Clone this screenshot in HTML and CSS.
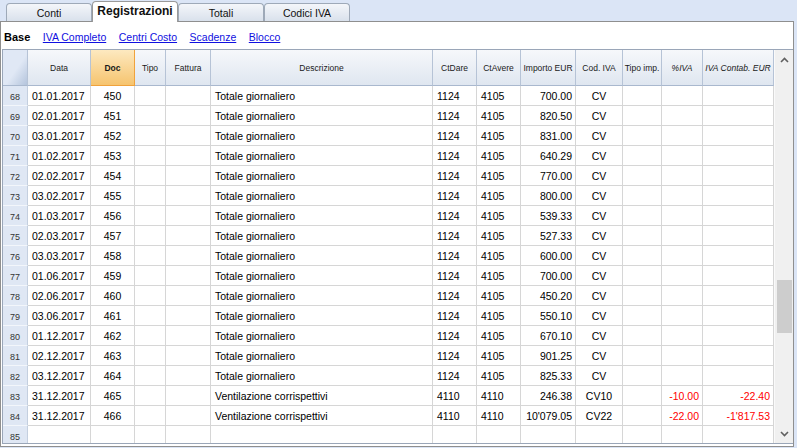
FILE: index.html
```html
<!DOCTYPE html>
<html>
<head>
<meta charset="utf-8">
<link rel="stylesheet" href="styles.css">
</head>
<body>
<div class="tabbar">
  <div class="tab">Conti</div>
  <div class="tab active">Registrazioni</div>
  <div class="tab">Totali</div>
  <div class="tab">Codici IVA</div>
</div>
<div class="panel">
  <div class="views">
    <span class="cur">Base</span>
    <a class="view">IVA Completo</a>
    <a class="view">Centri Costo</a>
    <a class="view">Scadenze</a>
    <a class="view">Blocco</a>
  </div>
  <div class="gridwrap">
    <div class="grid">
      <div class="h rn"></div>
      <div class="h">Data</div>
      <div class="h doc">Doc</div>
      <div class="h">Tipo</div>
      <div class="h">Fattura</div>
      <div class="h">Descrizione</div>
      <div class="h">CtDare</div>
      <div class="h">CtAvere</div>
      <div class="h">Importo EUR</div>
      <div class="h">Cod. IVA</div>
      <div class="h">Tipo imp.</div>
      <div class="h it">%IVA</div>
      <div class="h it">IVA Contab. EUR</div>

      <div class="n">68</div><div class="c">01.01.2017</div><div class="c m">450</div><div class="c"></div><div class="c"></div><div class="c">Totale giornaliero</div><div class="c">1124</div><div class="c">4105</div><div class="c r">700.00</div><div class="c m">CV</div><div class="c"></div><div class="c"></div><div class="c"></div>
      <div class="n">69</div><div class="c">02.01.2017</div><div class="c m">451</div><div class="c"></div><div class="c"></div><div class="c">Totale giornaliero</div><div class="c">1124</div><div class="c">4105</div><div class="c r">820.50</div><div class="c m">CV</div><div class="c"></div><div class="c"></div><div class="c"></div>
      <div class="n">70</div><div class="c">03.01.2017</div><div class="c m">452</div><div class="c"></div><div class="c"></div><div class="c">Totale giornaliero</div><div class="c">1124</div><div class="c">4105</div><div class="c r">831.00</div><div class="c m">CV</div><div class="c"></div><div class="c"></div><div class="c"></div>
      <div class="n">71</div><div class="c">01.02.2017</div><div class="c m">453</div><div class="c"></div><div class="c"></div><div class="c">Totale giornaliero</div><div class="c">1124</div><div class="c">4105</div><div class="c r">640.29</div><div class="c m">CV</div><div class="c"></div><div class="c"></div><div class="c"></div>
      <div class="n">72</div><div class="c">02.02.2017</div><div class="c m">454</div><div class="c"></div><div class="c"></div><div class="c">Totale giornaliero</div><div class="c">1124</div><div class="c">4105</div><div class="c r">770.00</div><div class="c m">CV</div><div class="c"></div><div class="c"></div><div class="c"></div>
      <div class="n">73</div><div class="c">03.02.2017</div><div class="c m">455</div><div class="c"></div><div class="c"></div><div class="c">Totale giornaliero</div><div class="c">1124</div><div class="c">4105</div><div class="c r">800.00</div><div class="c m">CV</div><div class="c"></div><div class="c"></div><div class="c"></div>
      <div class="n">74</div><div class="c">01.03.2017</div><div class="c m">456</div><div class="c"></div><div class="c"></div><div class="c">Totale giornaliero</div><div class="c">1124</div><div class="c">4105</div><div class="c r">539.33</div><div class="c m">CV</div><div class="c"></div><div class="c"></div><div class="c"></div>
      <div class="n">75</div><div class="c">02.03.2017</div><div class="c m">457</div><div class="c"></div><div class="c"></div><div class="c">Totale giornaliero</div><div class="c">1124</div><div class="c">4105</div><div class="c r">527.33</div><div class="c m">CV</div><div class="c"></div><div class="c"></div><div class="c"></div>
      <div class="n">76</div><div class="c">03.03.2017</div><div class="c m">458</div><div class="c"></div><div class="c"></div><div class="c">Totale giornaliero</div><div class="c">1124</div><div class="c">4105</div><div class="c r">600.00</div><div class="c m">CV</div><div class="c"></div><div class="c"></div><div class="c"></div>
      <div class="n">77</div><div class="c">01.06.2017</div><div class="c m">459</div><div class="c"></div><div class="c"></div><div class="c">Totale giornaliero</div><div class="c">1124</div><div class="c">4105</div><div class="c r">700.00</div><div class="c m">CV</div><div class="c"></div><div class="c"></div><div class="c"></div>
      <div class="n">78</div><div class="c">02.06.2017</div><div class="c m">460</div><div class="c"></div><div class="c"></div><div class="c">Totale giornaliero</div><div class="c">1124</div><div class="c">4105</div><div class="c r">450.20</div><div class="c m">CV</div><div class="c"></div><div class="c"></div><div class="c"></div>
      <div class="n">79</div><div class="c">03.06.2017</div><div class="c m">461</div><div class="c"></div><div class="c"></div><div class="c">Totale giornaliero</div><div class="c">1124</div><div class="c">4105</div><div class="c r">550.10</div><div class="c m">CV</div><div class="c"></div><div class="c"></div><div class="c"></div>
      <div class="n">80</div><div class="c">01.12.2017</div><div class="c m">462</div><div class="c"></div><div class="c"></div><div class="c">Totale giornaliero</div><div class="c">1124</div><div class="c">4105</div><div class="c r">670.10</div><div class="c m">CV</div><div class="c"></div><div class="c"></div><div class="c"></div>
      <div class="n">81</div><div class="c">02.12.2017</div><div class="c m">463</div><div class="c"></div><div class="c"></div><div class="c">Totale giornaliero</div><div class="c">1124</div><div class="c">4105</div><div class="c r">901.25</div><div class="c m">CV</div><div class="c"></div><div class="c"></div><div class="c"></div>
      <div class="n">82</div><div class="c">03.12.2017</div><div class="c m">464</div><div class="c"></div><div class="c"></div><div class="c">Totale giornaliero</div><div class="c">1124</div><div class="c">4105</div><div class="c r">825.33</div><div class="c m">CV</div><div class="c"></div><div class="c"></div><div class="c"></div>
      <div class="n">83</div><div class="c">31.12.2017</div><div class="c m">465</div><div class="c"></div><div class="c"></div><div class="c">Ventilazione corrispettivi</div><div class="c">4110</div><div class="c">4110</div><div class="c r">246.38</div><div class="c m">CV10</div><div class="c"></div><div class="c r neg">-10.00</div><div class="c r neg">-22.40</div>
      <div class="n">84</div><div class="c">31.12.2017</div><div class="c m">466</div><div class="c"></div><div class="c"></div><div class="c">Ventilazione corrispettivi</div><div class="c">4110</div><div class="c">4110</div><div class="c r">10'079.05</div><div class="c m">CV22</div><div class="c"></div><div class="c r neg">-22.00</div><div class="c r neg">-1'817.53</div>
      <div class="n">85</div><div class="c"></div><div class="c"></div><div class="c"></div><div class="c"></div><div class="c"></div><div class="c"></div><div class="c"></div><div class="c"></div><div class="c"></div><div class="c"></div><div class="c"></div><div class="c"></div>
    </div>
    <div class="scrollbar">
      <svg class="arrow" width="9" height="6" viewBox="0 0 9 6"><path d="M1 5 L4.5 1.5 L8 5" fill="none" stroke="#606060" stroke-width="1.6"/></svg>
      <div class="track"><div class="thumb"></div></div>
      <svg class="arrow" width="9" height="6" viewBox="0 0 9 6"><path d="M1 1 L4.5 4.5 L8 1" fill="none" stroke="#606060" stroke-width="1.6"/></svg>
    </div>
  </div>
</div>
</body>
</html>
```

FILE: styles.css
```css
html, body {
  margin: 0;
  padding: 0;
}
body {
  background: #dbe5f6;
  width: 797px;
  height: 448px;
  overflow: hidden;
  font-family: "Liberation Sans", Arial, sans-serif;
  color: #000;
}
.tabbar {
  height: 21px;
  display: flex;
  align-items: flex-end;
  padding-left: 6px;
}
.tab {
  box-sizing: border-box;
  width: 86px;
  height: 18px;
  border: 1px solid #9ea9b8;
  border-bottom: none;
  border-radius: 4px 4px 0 0;
  background: linear-gradient(#f4f6fa, #d9e1ec);
  font-size: 10.5px;
  display: flex;
  align-items: center;
  justify-content: center;
  padding-top: 1px;
  color: #111;
}
.tab.active {
  height: 21px;
  margin-bottom: -1px;
  background: #fff;
  font-weight: bold;
  font-size: 12px;
  position: relative;
  z-index: 1;
  border-color: #9a9a9a;
  padding-top: 0;
  padding-bottom: 2px;
}
.panel {
  box-sizing: border-box;
  width: 794px;
  height: 426px;
  border: 1px solid #8f8f8f;
  background: #fff;
  display: flex;
  flex-direction: column;
}
.views {
  box-sizing: border-box;
  height: 27px;
  padding: 3px 0 0 3px;
  display: flex;
  align-items: center;
  gap: 12.5px;
  font-size: 10.5px;
}
.cur {
  font-weight: bold;
  font-size: 11px;
}
.view {
  color: #1010e0;
  text-decoration: underline;
}
.gridwrap {
  display: flex;
  margin: 0 0 2px 1px;
  border: 1px solid #9aa6b8;
  border-right: none;
  height: 395px;
  box-sizing: border-box;
}
.grid {
  display: grid;
  grid-template-columns: 25px 63px 44px 31px 45px 222px 44px 44px 55px 47px 39px 41px 71px;
  grid-template-rows: 36px;
  grid-auto-rows: 20px;
  height: 393px;
  overflow: hidden;
  font-size: 10.5px;
}
.grid > div {
  box-sizing: border-box;
  border-right: 1px solid #d6d6d6;
  border-bottom: 1px solid #d6d6d6;
  display: flex;
  align-items: center;
  white-space: nowrap;
  overflow: hidden;
}
.grid > .h {
  background: linear-gradient(#f6f8fb, #dfe6f0);
  border-right-color: #b6c3d6;
  border-bottom-color: #a9b8ce;
  justify-content: center;
  font-size: 8.5px;
  color: #1a1a1a;
}
.grid > .h.rn {
  background: linear-gradient(to bottom right, #e0e8f5 55%, #b4c4dc);
}
.grid > .h.doc {
  background: linear-gradient(#fde9c0, #f6c46f);
  border-right-color: #f0a23c;
  border-bottom-color: #f0a23c;
  font-weight: bold;
}
.grid > .h.it {
  font-style: italic;
}
.grid > .n {
  background: #dfe7f4;
  border-bottom-color: #f3f6fb;
  border-right-color: #c4cfdf;
  justify-content: center;
  font-size: 9px;
  color: #333;
  padding-top: 2px;
}
.grid > .c {
  padding: 0 3px 0 4px;
}
.grid > .c.m {
  justify-content: center;
  padding: 0;
}
.grid > .c.r {
  justify-content: flex-end;
  padding: 0 3px 0 0;
}
.grid > .c.neg {
  color: #ff0000;
}
.scrollbar {
  width: 19px;
  background: #f0f0f0;
  display: flex;
  flex-direction: column;
  align-items: center;
  border-left: 1px solid #fafafa;
  box-sizing: border-box;
}
.arrow {
  margin: 7px 0 6px;
  flex: none;
}
.track {
  flex: 1;
  width: 100%;
  padding-top: 211px;
  box-sizing: border-box;
  display: flex;
  justify-content: center;
}
.thumb {
  width: 15px;
  height: 53px;
  background: #cdcdcd;
}
```
